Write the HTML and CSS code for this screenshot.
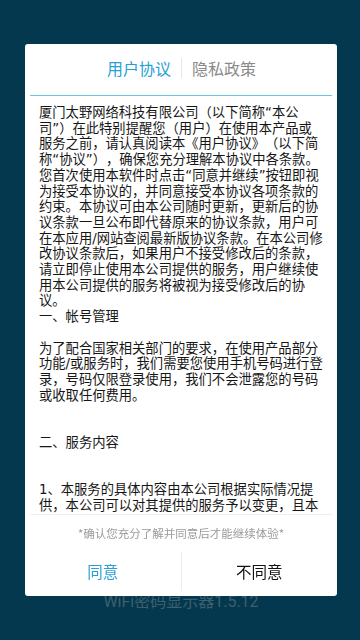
FILE: index.html
```html
<!DOCTYPE html>
<html lang="zh-CN">
<head>
<meta charset="utf-8">
<title>用户协议</title>
<link rel="stylesheet" href="styles.css">
</head>
<body>
<div class="app">
  <div class="version">WiFi密码显示器1.5.12</div>
</div>
<div class="dialog">
  <div class="tabs">
    <span class="tab active">用户协议</span>
    <span class="tab-sep"></span>
    <span class="tab">隐私政策</span>
  </div>
  <div class="tab-line"></div>
  <div class="content">
    <p>厦门太野网络科技有限公司（以下简称“本公司”）在此特别提醒您（用户）在使用本产品或服务之前，请认真阅读本《用户协议》（以下简称“协议”），确保您充分理解本协议中各条款。您首次使用本软件时点击“同意并继续”按钮即视为接受本协议的，并同意接受本协议各项条款的约束。本协议可由本公司随时更新，更新后的协议条款一旦公布即代替原来的协议条款，用户可在本应用/网站查阅最新版协议条款。在本公司修改协议条款后，如果用户不接受修改后的条款，请立即停止使用本公司提供的服务，用户继续使用本公司提供的服务将被视为接受修改后的协议。</p>
    <p>一、帐号管理</p>
    <p class="gap1">为了配合国家相关部门的要求，在使用产品部分功能/或服务时，我们需要您使用手机号码进行登录，号码仅限登录使用，我们不会泄露您的号码或收取任何费用。</p>
    <p class="gap2">二、服务内容</p>
    <p class="gap2">1、本服务的具体内容由本公司根据实际情况提供，本公司可以对其提供的服务予以变更，且本</p>
  </div>
  <div class="notice">*确认您充分了解并同意后才能继续体验*</div>
  <div class="actions">
    <div class="btn agree">同意</div>
    <div class="btn-sep"></div>
    <div class="btn disagree">不同意</div>
  </div>
</div>
</body>
</html>
```
FILE: styles.css
```css
html, body {
  margin: 0;
  padding: 0;
}
body {
  width: 360px;
  height: 640px;
  background: #03384f;
  font-family: Roboto, "Noto Sans CJK SC", sans-serif;
  text-spacing-trim: space-all;
  overflow: hidden;
}
.app {
  height: 640px;
  display: flex;
  flex-direction: column;
  justify-content: flex-end;
  align-items: center;
}
.version {
  font-size: 16px;
  line-height: 20px;
  color: #3e5f6d;
  padding-bottom: 28px;
  padding-left: 2px;
}
.dialog {
  position: fixed;
  left: 25px;
  top: 44px;
  width: 312px;
  height: 552px;
  background: #ffffff;
  border-radius: 3px;
  display: flex;
  flex-direction: column;
}
.tabs {
  height: 48px;
  padding-bottom: 3px;
  display: flex;
  align-items: center;
  justify-content: center;
  padding-left: 1px;
}
.tab {
  font-size: 16px;
  line-height: 20px;
  color: #8a8a8a;
  font-family: "Noto Sans CJK SC", sans-serif;
}
.tab.active {
  color: #2a9fd4;
}
.tab-sep {
  width: 1px;
  height: 20px;
  background: #e6e6e6;
  margin: 0 10px 0 10px;
}
.tab-line {
  height: 1px;
  margin: 0 5px;
  background: #6cc3e2;
}
.content {
  height: 409px;
  margin: 0 5px;
  padding: 9px 8.75px 0 9px;
  overflow: hidden;
  border-bottom: 1px solid #efefef;
  font-family: "DejaVu Sans", "Noto Sans CJK SC", sans-serif;
  font-size: 13.3px;
  line-height: 15.7px;
  color: #161616;
  text-spacing-trim: space-all;
}
.content p {
  margin: 0;
}
.content .gap1 {
  margin-top: 15.7px;
}
.content .gap2 {
  margin-top: 31.4px;
}
.notice {
  padding: 10px 0 4px;
  line-height: 16px;
  font-size: 11.5px;
  color: #9b9b9b;
  text-align: center;
  font-family: "Noto Sans CJK SC", sans-serif;
}
.actions {
  display: flex;
  align-items: center;
  padding: 7px 0 5px;
}
.btn {
  flex: 1;
  height: 39px;
  line-height: 39px;
  text-align: center;
  font-size: 15.5px;
  font-family: "Noto Sans CJK SC", sans-serif;
}
.btn.agree {
  color: #2a9fd4;
}
.btn.disagree {
  color: #111111;
}
.btn-sep {
  width: 1px;
  height: 39px;
  background: #ececec;
}
```
